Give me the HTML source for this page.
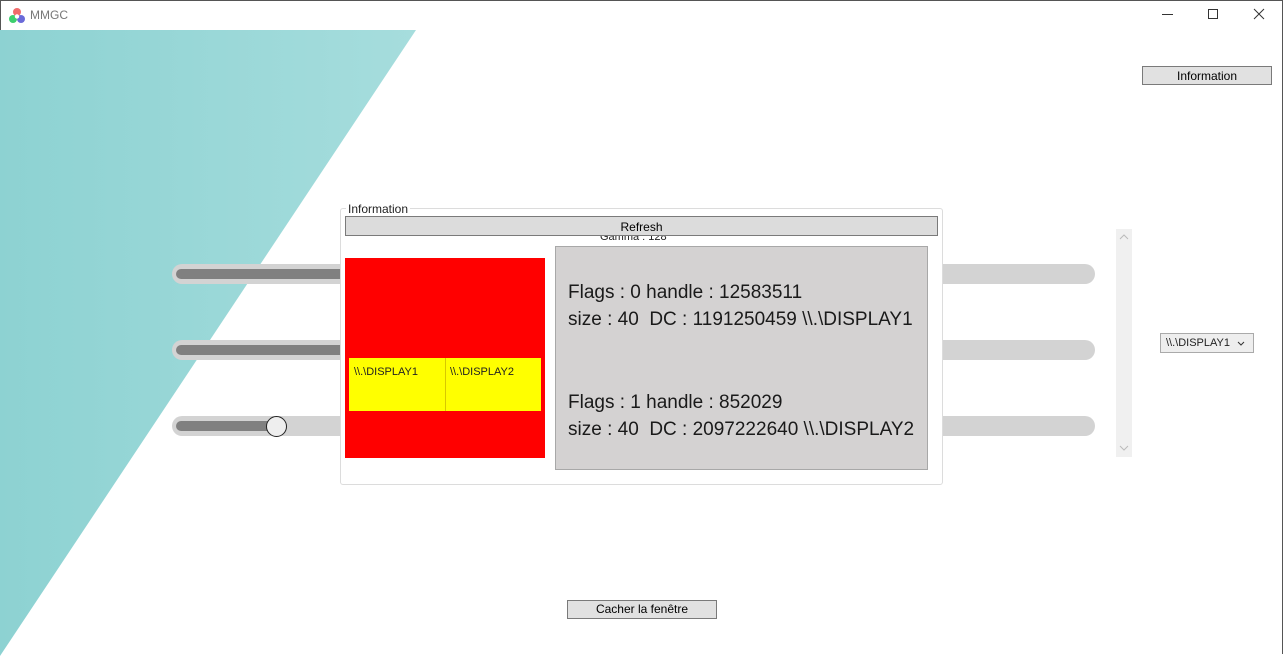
<!DOCTYPE html>
<html><head><meta charset="utf-8"><style>
*{margin:0;padding:0;box-sizing:border-box}
body{width:1283px;height:654px;position:relative;overflow:hidden;background:#fff;font-family:"Liberation Sans",sans-serif;font-size:12px;color:#000}
.a{position:absolute}
.btn{position:absolute;background:#e1e1e1;border:1px solid #7a7a7a;text-align:center;font-size:12px;line-height:17px}
.track{position:absolute;left:172px;width:923px;height:20px;border-radius:10px;background:#d3d3d3}
.fill{position:absolute;left:4px;top:5px;height:10px;border-radius:5px;background:#808080}
.g{font-size:19px;line-height:27px;color:#1a1a1a;position:absolute;left:12px}
</style></head><body>
<div class="a" style="left:0;top:0;width:1283px;height:1px;background:#555"></div>
<div class="a" style="left:0;top:0;width:1px;height:654px;background:#555"></div>
<div class="a" style="left:1282px;top:0;width:1px;height:654px;background:#555"></div>
<svg class="a" style="left:8px;top:7px" width="18" height="18" viewBox="0 0 18 18">
<circle cx="9" cy="5" r="4" fill="#f06b6b"/><circle cx="5" cy="12" r="4" fill="#3ccf6e"/><circle cx="13" cy="12" r="4" fill="#6a6ad8"/><circle cx="9" cy="9.5" r="2.2" fill="#fff"/></svg>
<div class="a" style="left:30px;top:8px;font-size:12px;color:#777">MMGC</div>
<div class="a" style="left:1162px;top:14px;width:11px;height:1px;background:#333"></div>
<div class="a" style="left:1208px;top:9px;width:10px;height:10px;border:1px solid #333"></div>
<svg class="a" style="left:1253px;top:8px" width="12" height="12"><path d="M1 1L11 11M11 1L1 11" stroke="#333" stroke-width="1"/></svg>
<svg class="a" style="left:0;top:30px" width="420" height="626">
<defs><linearGradient id="t" x1="0" x2="1"><stop offset="0" stop-color="#8dd2d2"/><stop offset="1" stop-color="#a6dddd"/></linearGradient></defs>
<polygon points="0,0 416,0 0,626" fill="url(#t)"/></svg>
<div class="btn" style="left:1142px;top:66px;width:130px;height:19px;line-height:18px">Information</div>
<div class="track" style="top:264px"><div class="fill" style="width:170px"></div></div>
<div class="track" style="top:340px"><div class="fill" style="width:170px"></div></div>
<div class="track" style="top:416px"><div class="fill" style="width:100px"></div></div>
<div class="a" style="left:266px;top:416px;width:21px;height:21px;border-radius:50%;background:#eee;border:1.5px solid #222"></div>
<div class="a" style="left:340px;top:208px;width:603px;height:277px;border:1px solid #dcdcdc;border-radius:3px;background:#fff"></div>
<div class="a" style="left:346px;top:202px;background:#fff;padding:0 2px;font-size:12px;color:#222">Information</div>
<div class="a" style="left:600px;top:231px;font-size:11px;color:#222">Gamma : 128</div>
<div class="btn" style="left:345px;top:216px;width:593px;height:20px;background:#dcdcdc;line-height:20px">Refresh</div>
<div class="a" style="left:345px;top:258px;width:200px;height:200px;background:#f00"></div>
<div class="a" style="left:349px;top:358px;width:192px;height:53px;background:#ff0"></div>
<div class="a" style="left:445px;top:358px;width:1px;height:53px;background:#d8c800"></div>
<div class="a" style="left:354px;top:366px;font-size:11px;color:#222">\\.\DISPLAY1</div>
<div class="a" style="left:450px;top:366px;font-size:11px;color:#222">\\.\DISPLAY2</div>
<div class="a" style="left:555px;top:246px;width:373px;height:224px;background:#d4d2d2;border:1px solid #a8a8a8">
<div class="g" style="top:32px">Flags : 0 handle : 12583511</div>
<div class="g" style="top:59px">size : 40&nbsp; DC : 1191250459 \\.\DISPLAY1</div>
<div class="g" style="top:142px">Flags : 1 handle : 852029</div>
<div class="g" style="top:169px">size : 40&nbsp; DC : 2097222640 \\.\DISPLAY2</div>
</div>
<div class="a" style="left:1116px;top:229px;width:16px;height:228px;background:#f0f0f0"></div>
<svg class="a" style="left:1119px;top:234px" width="10" height="6"><path d="M1 5L5 1L9 5" stroke="#bbb" fill="none"/></svg>
<svg class="a" style="left:1119px;top:445px" width="10" height="6"><path d="M1 1L5 5L9 1" stroke="#bbb" fill="none"/></svg>
<div class="a" style="left:1160px;top:333px;width:94px;height:20px;border:1px solid #aaa;background:#eee;font-size:11px;line-height:18px;padding-left:5px;color:#222">\\.\DISPLAY1<svg style="position:absolute;right:8px;top:7px" width="8" height="5"><path d="M1 1L4 4L7 1" stroke="#333" fill="none"/></svg></div>
<div class="btn" style="left:567px;top:600px;width:150px;height:19px">Cacher la fenêtre</div>
</body></html>
